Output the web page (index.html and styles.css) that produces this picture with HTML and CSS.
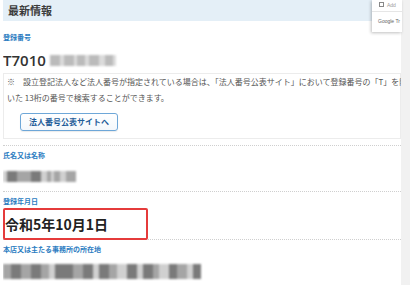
FILE: index.html
```html
<!DOCTYPE html>
<html lang="ja">
<head>
<meta charset="utf-8">
<title>最新情報</title>
<link rel="stylesheet" href="styles.css">
</head>
<body>
<div class="page">
  <main class="content">
    <div class="head"><h2 class="title">最新情報</h2></div>

    <section class="field f1">
      <div class="label">登録番号</div>
      <div class="num">T7010<span class="blur nb"><i class="bm w10"></i><i class="bl w4"></i><i class="bm w10"></i><i class="bl w3"></i><i class="bm w8"></i><i class="bl w4"></i><i class="bm w10"></i><i class="bl w6"></i><i class="bm w8"></i><i class="bl w3"></i></span></div>
      <div class="note">
        <p class="line">※　設立登記法人など法人番号が指定されている場合は、「法人番号公表サイト」において登録番号の「T」を除</p>
        <p class="line">いた 13桁の番号で検索することができます。</p>
        <a class="btn">法人番号公表サイトへ</a>
      </div>
    </section>

    <section class="field f2">
      <div class="label">氏名又は名称</div>
      <div class="blur name"><i class="bl w4"></i><i class="bk w10"></i><i class="bm w14"></i><i class="bk w10"></i><i class="bl w6"></i><i class="bm w4"></i><i class="bl w3"></i><i class="bm w6"></i><i class="bl w6"></i><i class="bm w10"></i></div>
    </section>

    <section class="field f3">
      <div class="label">登録年月日</div>
      <div class="date">令和5年10月1日</div>
    </section>

    <section class="field f4">
      <div class="label">本店又は主たる事務所の所在地</div>
      <div class="blur addr"><i class="bm w8"></i><i class="bk w10"></i><i class="bm w10"></i><i class="bk w10"></i><i class="bm w8"></i><i class="bl w6"></i><i class="bk w10"></i><i class="bk w8"></i><i class="bm w10"></i><i class="bk w10"></i><i class="bl w6"></i><i class="bk w10"></i><i class="bm w8"></i><i class="bl w10"></i><i class="bk w10"></i><i class="bl w6"></i><i class="bk w10"></i><i class="bm w6"></i><i class="bl w10"></i><i class="bk w8"></i><i class="bm w10"></i><i class="bl w6"></i><i class="bk w8"></i></div>
    </section>
  </main>
  <div class="scrollbar"></div>
  <div class="popup">
    <div class="pop-top"><span class="chk"></span><span class="pop-t">Add</span></div>
    <div class="pop-bot">Google Tr</div>
  </div>
</div>
</body>
</html>
```

FILE: styles.css
```css
html, body {
  margin: 0;
  padding: 0;
  background: #fff;
}
body {
  font-family: "Noto Sans CJK JP", "Noto Sans", sans-serif;
  color: #444;
  width: 410px;
  height: 285px;
  overflow: hidden;
}
.page {
  position: relative;
  display: flex;
  width: 410px;
  height: 285px;
}
.content {
  width: 398px;
  margin-left: 3px;
  overflow: hidden;
}
.scrollbar {
  width: 9px;
  background: #f1f1f1;
}
.head {
  height: 21px;
  background: #e4eff7;
}
.title {
  margin: 0;
  padding-left: 5px;
  font-size: 11px;
  line-height: 21px;
  font-weight: bold;
  color: #3c3c3c;
}
.field {
  border-bottom: 1px dotted #cfcfcf;
}
.label {
  height: 10px;
  font-size: 7px;
  line-height: 10px;
  font-weight: bold;
  color: #2b7cc1;
  white-space: nowrap;
}
.f1 { padding-top: 11px; padding-bottom: 6px; }
.f2 { padding-top: 4px; padding-bottom: 9px; }
.f3 { padding-top: 4px; }
.f4 { padding-top: 4px; border-bottom: none; }

.num {
  margin-top: 9px;
  height: 18px;
  display: flex;
  align-items: center;
  font-family: "Open Sans", "Noto Sans", sans-serif;
  font-size: 15px;
  font-weight: 600;
  color: #333;
  line-height: 18px;
}
.note {
  margin-top: 4px;
  border: 1px solid #ececec;
  padding: 0 0 7px 3px;
  background: #fff;
}
.line {
  margin: 0;
  font-size: 8px;
  line-height: 16px;
  color: #555;
  white-space: nowrap;
}
.btn {
  display: inline-flex;
  align-items: center;
  justify-content: center;
  margin-top: 4px;
  margin-left: 13px;
  width: 96px;
  height: 16px;
  border: 1px solid #6ea7d8;
  border-radius: 3px;
  background: linear-gradient(#ffffff, #f4f8fc);
  color: #1f5c99;
  font-size: 8px;
  font-weight: bold;
  box-shadow: 0 1px 1px rgba(0,0,0,0.08);
}

.blur {
  display: flex;
  align-items: center;
  filter: blur(1.2px);
}
.blur i {
  display: block;
  height: 100%;
}
.nb {
  height: 11px;
  margin-left: 4px;
  opacity: 0.75;
}
.name {
  margin-top: 11px;
  height: 11px;
  width: 90px;
}
.addr {
  margin-top: 10px;
  height: 15px;
  width: 250px;
}
.bk { background: #7a7a7a; }
.bm { background: #a5a5a5; }
.bl { background: #d0d0d0; }
.w3 { width: 3px; }
.w4 { width: 4px; }
.w6 { width: 6px; }
.w8 { width: 8px; }
.w10 { width: 10px; }
.w14 { width: 14px; }

.date {
  position: relative;
  z-index: 1;
  margin-top: 2px;
  margin-bottom: -1px;
  width: 141px;
  height: 28px;
  border: 2px solid #e53b3b;
  border-radius: 2px;
  display: flex;
  align-items: center;
  padding-left: 0;
  box-sizing: content-box;
  font-size: 14px;
  font-weight: bold;
  color: #222;
}

.popup {
  position: absolute;
  top: 0;
  left: 372px;
  width: 30px;
  height: 32px;
  background: #fff;
  box-shadow: -1px 1px 3px rgba(0,0,0,0.25);
  overflow: hidden;
  font-family: "Liberation Sans", sans-serif;
}
.pop-top {
  height: 12px;
  border-bottom: 1px solid #e6e6e6;
  display: flex;
  align-items: flex-end;
  gap: 3px;
  padding-left: 7px;
  box-sizing: border-box;
}
.chk {
  width: 3px;
  height: 3px;
  border: 1px solid #888;
  margin-bottom: 4px;
}
.pop-t {
  font-size: 5px;
  color: #999;
  margin-bottom: 3px;
}
.pop-bot {
  padding: 6px 0 0 6px;
  font-size: 5px;
  color: #666;
  white-space: nowrap;
}
```
